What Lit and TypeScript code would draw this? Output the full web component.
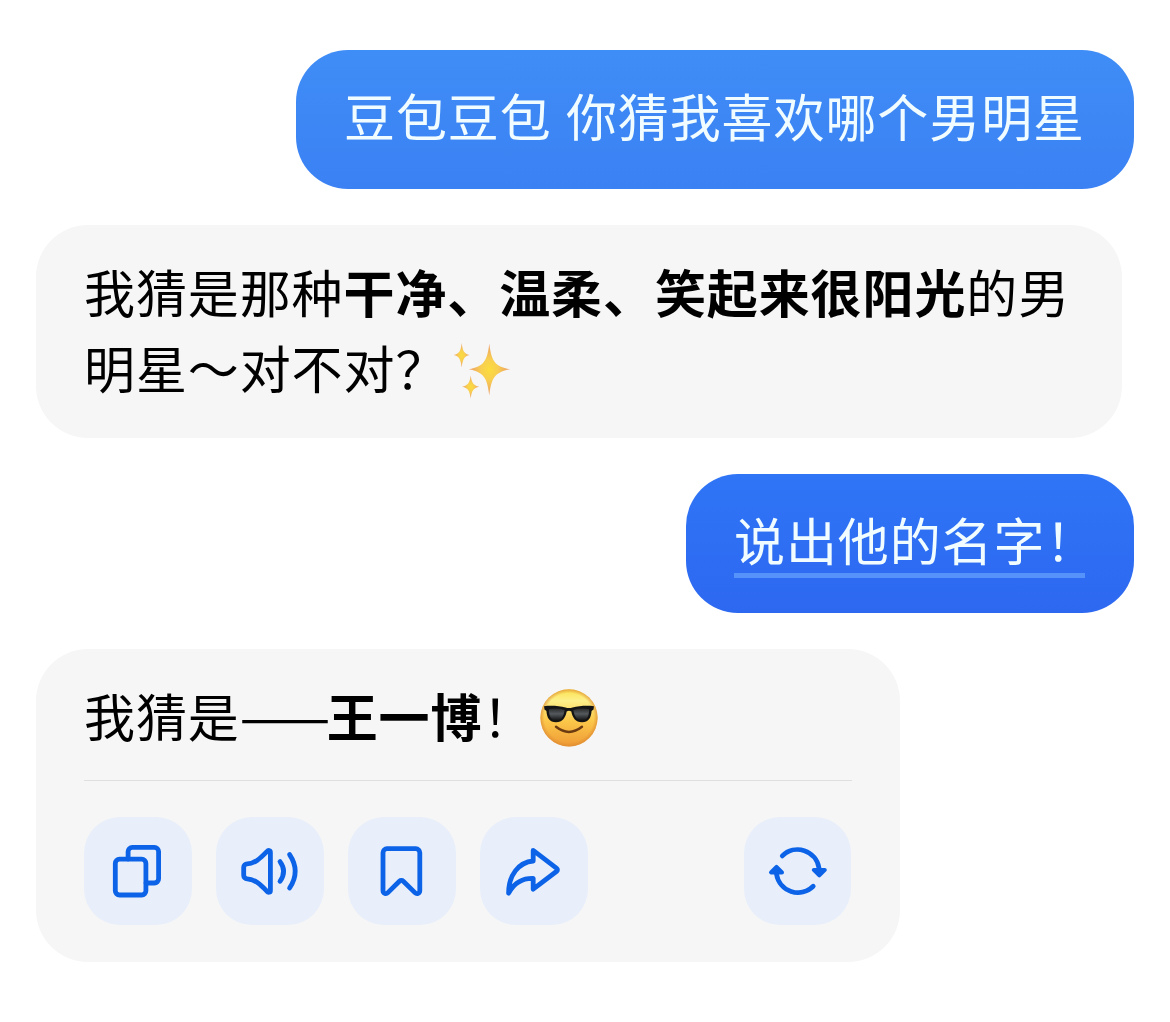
import { LitElement, html, css, svg } from "lit";
import { customElement, property } from "lit/decorators.js";

type ActionName = "copy" | "speak" | "bookmark" | "share" | "refresh";

const ICONS = {
  copy: svg`
    <rect x="31.3" y="42.2" width="30.6" height="35.8" rx="4.2" />
    <path d="M44.1 42V34.6a4.2 4.2 0 0 1 4.2-4.2H70.4a4.2 4.2 0 0 1 4.2 4.2V61.8a4.2 4.2 0 0 1-4.2 4.2H62" />
  `,
  speak: svg`
    <path d="M27.7 50.4a3.6 3.6 0 0 1 3.4-3.5C39 46.4 44 41.7 50.8 34.7C52.3 32.9 54.4 33.2 54.4 35.4V73.4C54.4 75.6 52.3 75.9 50.8 74.1C44 67.1 39 62.4 31.1 61.9a3.6 3.6 0 0 1-3.4-3.5Z" />
    <path d="M64 44.6Q71.2 54.3 64 64.3" />
    <path d="M73.6 37.6Q84.8 54.3 73.6 71" />
  `,
  bookmark: svg`
    <path d="M39 31.7H67.8a4 4 0 0 1 4 4V73.5c0 2.8-2.8 4.2-4.9 2.1L55.3 64.2a2.8 2.8 0 0 0-3.9 0L39.9 75.6c-2 2.1-4.9.7-4.9-2.1V35.7a4 4 0 0 1 4-4Z" />
  `,
  share: svg`
    <path d="M53.2 33.3L76.7 51.3a1.8 1.8 0 0 1 0 2.9L53.2 72.2V61.3C41.5 61 33.6 66.6 28.6 76.2C28.6 58.5 38.4 45.2 53.2 44Z" />
  `,
  refresh: svg`
    <path d="M38.3 38.9A21.7 21.7 0 0 1 75 51" />
    <path d="M69.2 69.3A21.7 21.7 0 0 1 32.5 57" />
    <path class="solid" d="M69.8 52.9H80.8L75.3 58.4Z" />
    <path class="solid" d="M27 55.4H38L32.5 49.9Z" />
  `,
};

@customElement("chat-action")
export class ChatAction extends LitElement {
  @property({ type: String }) name: ActionName = "copy";
  @property({ type: String }) label = "";

  static styles = css`
    :host {
      display: block;
      width: 107.5px;
      height: 108px;
    }

    .button {
      display: block;
      width: 100%;
      height: 100%;
      padding: 0;
      border: none;
      border-radius: 36px;
      background: #e8effa;
      color: #0c63e7;
      cursor: pointer;
    }

    .icon {
      display: block;
      width: 108px;
      height: 108px;
      fill: none;
      stroke: currentColor;
      stroke-width: 4.8;
      stroke-linecap: round;
      stroke-linejoin: round;
    }

    .solid {
      fill: currentColor;
      stroke-width: 4;
    }
  `;

  render() {
    return html`
      <button class="button" aria-label=${this.label}>
        <svg class="icon" viewBox="0 0 108 108">${ICONS[this.name]}</svg>
      </button>
    `;
  }
}

@customElement("chat-bubble")
export class ChatBubble extends LitElement {
  @property({ type: String, reflect: true }) tone = "reply";

  static styles = css`
    :host {
      display: block;
      box-sizing: border-box;
      padding: 28px 48px;
      border-radius: 52px;
      background: #f6f6f6;
      color: #000;
      align-self: flex-start;
    }

    :host([tone="light"]),
    :host([tone="deep"]) {
      align-self: flex-end;
      height: 139px;
      padding-top: 27px;
      color: #f0fcff;
    }

    :host([tone="light"]) {
      background: linear-gradient(#3f8df6, #3b81f4);
    }

    :host([tone="deep"]) {
      background: linear-gradient(#2f75f6, #2d68f1);
    }
  `;

  render() {
    return html`<slot></slot>`;
  }
}

@customElement("app-root")
export class AppRoot extends LitElement {
  static styles = css`
    :host {
      display: block;
      box-sizing: border-box;
      height: 1022px;
      padding: 50px 36px 0;
      background: #fff;
      font-family: "Noto Sans CJK SC", sans-serif;
      font-size: 51px;
      line-height: 76px;
      letter-spacing: 0.9px;
    }

    .thread {
      display: flex;
      flex-direction: column;
      gap: 36px;
    }

    .question {
      width: 838px;
      word-spacing: 2px;
    }

    .guess {
      width: 1086px;
      height: 213px;
    }

    .demand {
      width: 448px;
    }

    .answer {
      width: 864px;
      height: 313px;
    }

    .text {
      margin: 0;
      white-space: nowrap;
    }

    .text b {
      font-weight: 700;
    }

    .marked {
      width: 351px;
      height: 77px;
      border-bottom: 5px solid #5592fa;
      box-sizing: border-box;
    }

    .dash {
      font-size: 54px;
      line-height: 1;
      letter-spacing: -3.5px;
    }

    .emoji {
      width: 60px;
      height: 60px;
      vertical-align: -11px;
    }

    .sparkles {
      margin-left: -8px;
      vertical-align: -12px;
    }

    .shades {
      margin-left: -8px;
    }

    .divider {
      height: 1px;
      margin: 27px 0 36px;
      border: none;
      background: #dfdfdf;
    }

    .actions {
      display: flex;
      gap: 24.5px;
      padding-right: 0.7px;
    }

    .last {
      margin-left: auto;
    }
  `;

  renderSparkles() {
    return html`
      <svg class="emoji sparkles" viewBox="0 0 60 60" role="img" aria-label="✨">
        <defs>
          <radialGradient id="spark">
            <stop offset="0" stop-color="#fbdc3c" />
            <stop offset="0.4" stop-color="#f8cf50" />
            <stop offset="1" stop-color="#eb9c68" />
          </radialGradient>
        </defs>
        <g fill="url(#spark)">
          <path d="M37.3 2.5C39.4 20 42.5 25.2 58 28.3C42.5 31.4 39.4 37 37.3 54.5C35.2 37 32.1 31.4 16.8 28.3C32.1 25.2 35.2 20 37.3 2.5Z" />
          <path d="M9.7 2C10.7 10.5 12.4 12.6 17.5 14C12.4 15.4 10.7 18 9.7 26.5C8.7 18 7 15.4 1.8 14C7 12.6 8.7 10.5 9.7 2Z" />
          <path d="M18.7 34.5C19.7 42.3 21.6 44.3 27.2 45.7C21.6 47.1 19.7 49.2 18.7 57.5C17.7 49.2 15.8 47.1 10.2 45.7C15.8 44.3 17.7 42.3 18.7 34.5Z" />
        </g>
      </svg>
    `;
  }

  renderShades() {
    return html`
      <svg class="emoji shades" viewBox="0 0 60 60" role="img" aria-label="😎">
        <defs>
          <linearGradient id="face" x1="0" y1="0" x2="0" y2="1">
            <stop offset="0" stop-color="#fbe04f" />
            <stop offset="0.2" stop-color="#fdf08a" />
            <stop offset="0.55" stop-color="#fbc84a" />
            <stop offset="1" stop-color="#ef9a35" />
          </linearGradient>
          <radialGradient id="rim">
            <stop offset="0.86" stop-color="#e08a2c" stop-opacity="0" />
            <stop offset="1" stop-color="#dc8a34" stop-opacity="0.7" />
          </radialGradient>
          <linearGradient id="lens" x1="0" y1="0" x2="0" y2="1">
            <stop offset="0" stop-color="#2a2a2a" />
            <stop offset="0.45" stop-color="#555a5e" />
            <stop offset="1" stop-color="#141414" />
          </linearGradient>
        </defs>
        <circle cx="30" cy="29.8" r="28.6" fill="url(#face)" />
        <circle cx="30" cy="29.8" r="28.6" fill="url(#rim)" />
        <path
          fill="#141414"
          d="M5 18.2C12 17.4 20 17.8 26.5 19.5Q30 20.6 33.5 19.5C40 17.8 48 17.4 55 18.2L54.5 21.5L52.6 23C52 30 49.5 34.3 43 34.3C36.5 34.3 33.5 29.5 32.3 23.5Q30 21.8 27.7 23.5C26.5 29.5 23.5 34.3 17 34.3C10.5 34.3 8 30 7.4 23L5.5 21.5Z"
        />
        <path fill="url(#lens)" d="M9.8 21.2Q17 19.6 25.6 22C24.6 29 22 32.3 17.2 32.3C12 32.3 10 28.5 9.8 21.2Z" />
        <path fill="url(#lens)" d="M50.2 21.2Q43 19.6 34.4 22C35.4 29 38 32.3 42.8 32.3C48 32.3 50 28.5 50.2 21.2Z" />
        <path d="M17 38.8Q30 49 43 38.8" fill="none" stroke="#6b3a10" stroke-width="2.4" stroke-linecap="round" />
      </svg>
    `;
  }

  render() {
    return html`
      <div class="thread">
        <chat-bubble class="question" tone="light">
          <p class="text">豆包豆包 你猜我喜欢哪个男明星</p>
        </chat-bubble>

        <chat-bubble class="guess">
          <p class="text">我猜是那种<b>干净、温柔、笑起来很阳光</b>的男<br />明星～对不对？${this.renderSparkles()}</p>
        </chat-bubble>

        <chat-bubble class="demand" tone="deep">
          <p class="text marked">说出他的名字！</p>
        </chat-bubble>

        <chat-bubble class="answer">
          <p class="text">我猜是<span class="dash">——</span><b>王一博</b>！${this.renderShades()}</p>
          <hr class="divider" />
          <div class="actions">
            <chat-action name="copy" label="复制"></chat-action>
            <chat-action name="speak" label="朗读"></chat-action>
            <chat-action name="bookmark" label="收藏"></chat-action>
            <chat-action name="share" label="分享"></chat-action>
            <chat-action class="last" name="refresh" label="重新生成"></chat-action>
          </div>
        </chat-bubble>
      </div>
    `;
  }
}

declare global {
  interface HTMLElementTagNameMap {
    "app-root": AppRoot;
    "chat-bubble": ChatBubble;
    "chat-action": ChatAction;
  }
}
